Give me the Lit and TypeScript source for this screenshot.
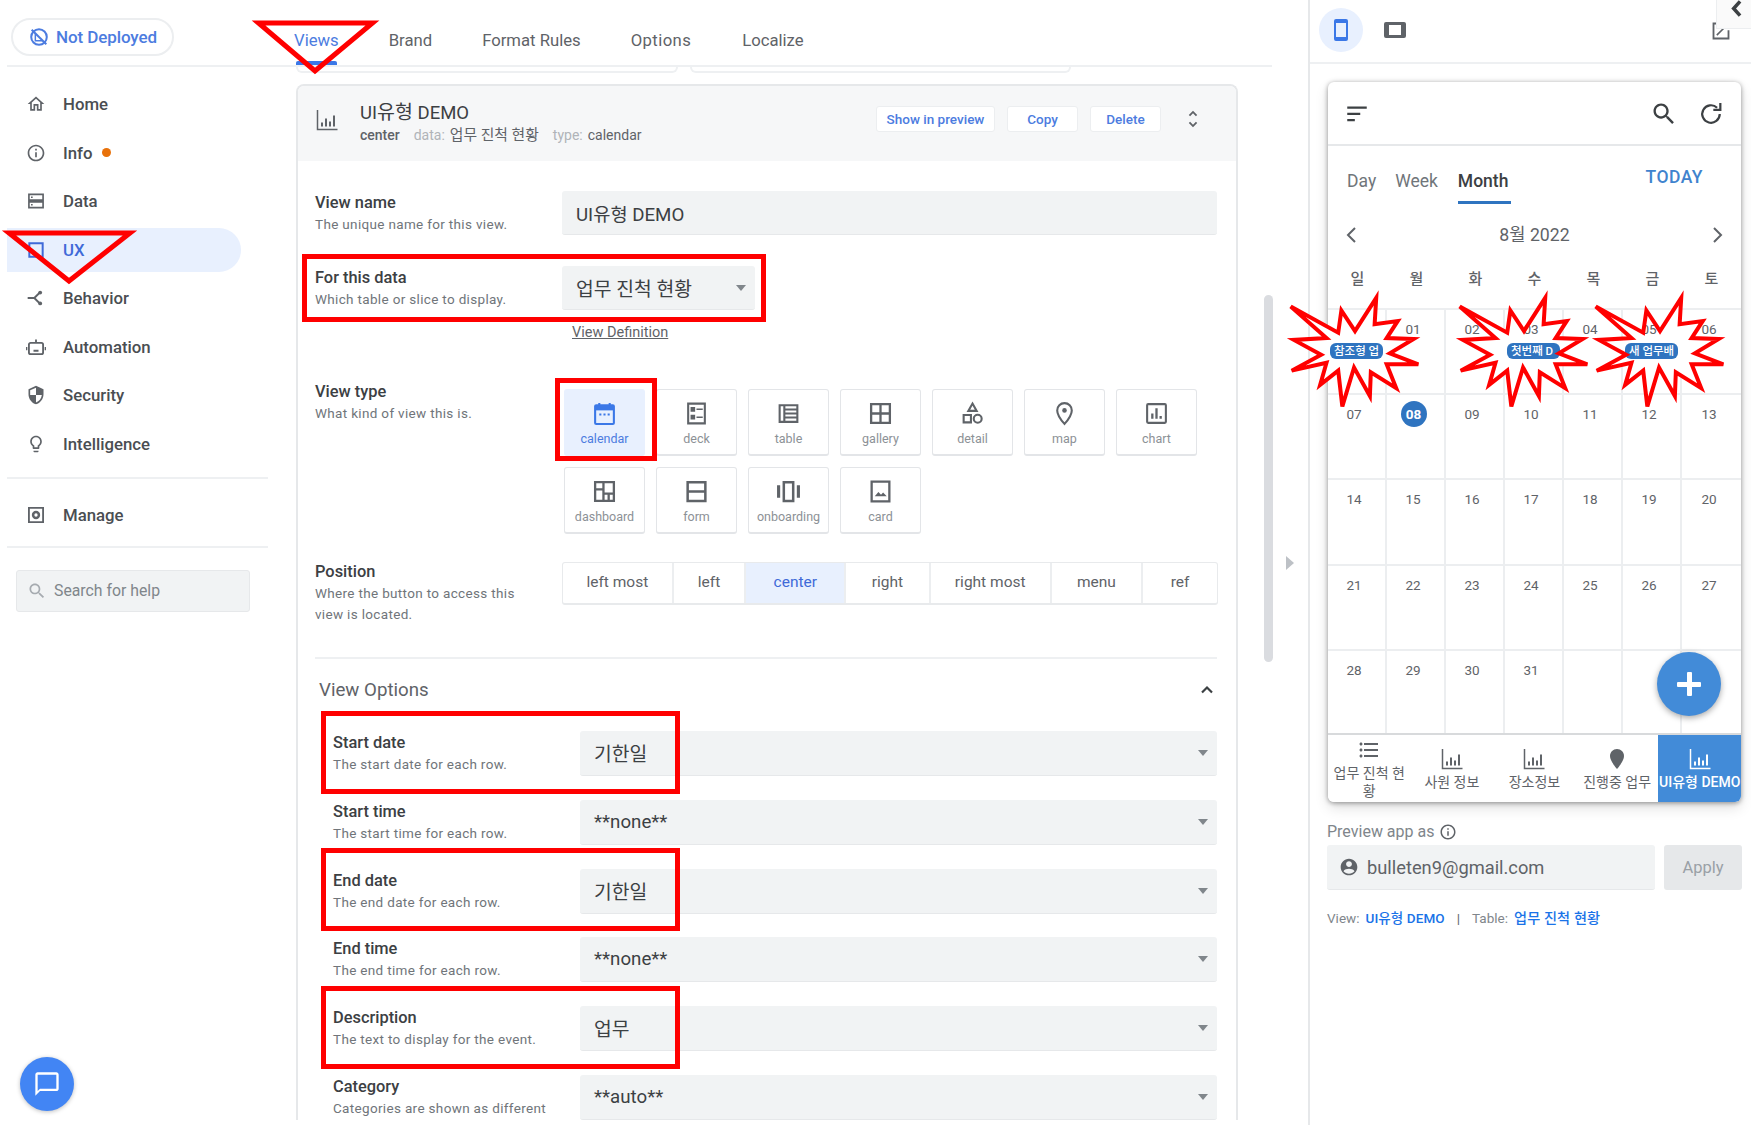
import { LitElement, html, css, svg } from "lit";
import { customElement } from "lit/decorators.js";

const P = {
  home: "M12 5.69l5 4.5V18h-2v-6H9v6H7v-7.81l5-4.5M12 3L2 12h3v8h6v-6h2v6h6v-8h3L12 3z",
  info: "M11 7h2v2h-2zm0 4h2v6h-2zm1-9C6.48 2 2 6.48 2 12s4.48 10 10 10 10-4.48 10-10S17.52 2 12 2zm0 18c-4.41 0-8-3.59-8-8s3.59-8 8-8 8 3.59 8 8-3.59 8-8 8z",
  shield: "M12 1L3 5v6c0 5.55 3.84 10.74 9 12 5.16-1.26 9-6.45 9-12V5l-9-4zm0 10.99h7c-.53 4.12-3.28 7.79-7 8.94V12H5V6.3l7-3.11v8.8z",
  bulb: "M9 21c0 .55.45 1 1 1h4c.55 0 1-.45 1-1v-1H9v1zm3-19C8.14 2 5 5.14 5 9c0 2.38 1.19 4.47 3 5.74V17c0 .55.45 1 1 1h6c.55 0 1-.45 1-1v-2.26c1.81-1.27 3-3.36 3-5.74 0-3.86-3.14-7-7-7zm2.85 11.1l-.85.6V16h-4v-2.3l-.85-.6C7.8 12.16 7 10.63 7 9c0-2.76 2.24-5 5-5s5 2.24 5 5c0 1.63-.8 3.16-2.15 4.1z",
  search: "M15.5 14h-.79l-.28-.27C15.41 12.59 16 11.11 16 9.5 16 5.91 13.09 3 9.5 3S3 5.91 3 9.5 5.91 16 9.5 16c1.61 0 3.09-.59 4.23-1.57l.27.28v.79l5 4.99L20.49 19l-4.99-5zm-6 0C7.01 14 5 11.99 5 9.5S7.01 5 9.5 5 14 7.01 14 9.5 11.99 14 9.5 14z",
  unfold: "M12 5.83L15.17 9l1.41-1.41L12 3 7.41 7.59 8.83 9 12 5.83zm0 12.34L8.83 15l-1.41 1.41L12 21l4.59-4.59L15.17 15 12 18.17z",
  chat: "M20 2H4c-1.1 0-2 .9-2 2v18l4-4h14c1.1 0 2-.9 2-2V4c0-1.1-.9-2-2-2zm0 14H6l-2 2V4h16v12z",
  account: "M12 2C6.48 2 2 6.48 2 12s4.48 10 10 10 10-4.48 10-10S17.52 2 12 2zm0 3c1.93 0 3.5 1.57 3.5 3.5S13.93 12 12 12s-3.5-1.57-3.5-3.5S10.07 5 12 5zm0 15c-2.6 0-5-1.1-6.6-3 .9-1.8 4.4-2.8 6.6-2.8s5.7 1 6.6 2.8C17 18.9 14.6 20 12 20z",
  pin: "M12 2C8.13 2 5 5.13 5 9c0 5.25 7 13 7 13s7-7.75 7-13c0-3.87-3.13-7-7-7z",
  list: "M4 10.5c-.83 0-1.5.67-1.5 1.5s.67 1.5 1.5 1.5 1.5-.67 1.5-1.5-.67-1.5-1.5-1.5zm0-6c-.83 0-1.5.67-1.5 1.5S3.17 7.5 4 7.5 5.5 6.83 5.5 6 4.83 4.5 4 4.5zm0 12c-.83 0-1.5.68-1.5 1.5s.68 1.5 1.5 1.5 1.5-.68 1.5-1.5-.67-1.5-1.5-1.5zM7 19h14v-2H7v2zm0-6h14v-2H7v2zm0-8v2h14V5H7z",
};

const fill = (d: string) => svg`<path d=${d} fill="currentColor"></path>`;
const line = (d: string, w = 2) =>
  svg`<path d=${d} fill="none" stroke="currentColor" stroke-width=${w}></path>`;

const ICONS: Record<string, unknown> = {
  home: fill(P.home),
  info: fill(P.info),
  data: line("M3.5 4h17v7h-17zM3.5 13h17v7h-17zM6 7.5h2M6 16.5h2"),
  ux: line("M4 4h16v16H4z", 2.4),
  behavior: svg`<path d="M2 12h8l6-6M10 12l6 6" fill="none" stroke="currentColor" stroke-width="2.200"></path><circle cx="17" cy="5.500" r="2.300" fill="currentColor"></circle><circle cx="17" cy="18.500" r="2.300" fill="currentColor"></circle>`,
  auto: svg`<path d="M5.500 7h13a2 2 0 0 1 2 2v9.500a2 2 0 0 1-2 2h-13a2 2 0 0 1-2-2V9a2 2 0 0 1 2-2zM12 7V3M0.500 12v4M23.500 12v4M8.500 12v.1M15.500 12v.1M9 16.500h6" fill="none" stroke="currentColor" stroke-width="2.200"></path>`,
  shield: fill(P.shield),
  bulb: fill(P.bulb),
  manage: svg`<path d="M3.500 3.500h17v17h-17z" fill="none" stroke="currentColor" stroke-width="2.200"></path><circle cx="12" cy="12" r="5" fill="currentColor"></circle><circle cx="12" cy="12" r="2" fill="#fff"></circle>`,
  search: fill(P.search),
  notdep: svg`<circle cx="12" cy="12" r="8.500" fill="none" stroke="currentColor" stroke-width="2.200"></circle><path d="M4 4l16 16" stroke="currentColor" stroke-width="2.200"></path><path d="M8 8v8h8" fill="none" stroke="currentColor" stroke-width="1.600"></path>`,
  bars: svg`<path d="M2.500 2v19.500h20" fill="none" stroke="currentColor" stroke-width="1.500"></path><path d="M7 18.500v-4M11 18.500v-8M15 18.500v-5M19 18.500v-11" fill="none" stroke="currentColor" stroke-width="2"></path>`,
  unfold: fill(P.unfold),
  chev: line("M6 15l6-6 6 6", 2.6),
  calendar: svg`<path d="M4 4h16a1 1 0 0 1 1 1v16a1 1 0 0 1-1 1H4a1 1 0 0 1-1-1V5a1 1 0 0 1 1-1zM7 2v3M17 2v3" fill="none" stroke="currentColor" stroke-width="2"></path><path d="M3 4h18v5H3z" fill="currentColor"></path><path d="M7 12h2v2H7zM11 12h2v2h-2zM15 12h2v2h-2z" fill="currentColor"></path>`,
  deck: svg`<path d="M4 2.500h16v19H4z" fill="none" stroke="currentColor" stroke-width="2"></path><path d="M7 6.500h3v3H7zM7 14h3v3H7zM12 8h6M12 15.500h6" fill="currentColor" stroke="currentColor" stroke-width="1.400"></path>`,
  table: line("M3.500 4h17v16h-17zM8 4v16M8 8.200h12.500M8 12h12.500M8 15.800h12.500"),
  gallery: line("M3 3h18v18H3zM12 3v18M3 12h18", 2.2),
  detail: svg`<path d="M12 2.500l4 7H8z" fill="none" stroke="currentColor" stroke-width="2"></path><path d="M3.500 13.500h7v7h-7z" fill="none" stroke="currentColor" stroke-width="2"></path><circle cx="17" cy="17" r="3.800" fill="none" stroke="currentColor" stroke-width="2"></circle>`,
  map: svg`<path d="M12 2C8 2 5 5 5 9c0 5 7 13 7 13s7-8 7-13c0-4-3-7-7-7z" fill="none" stroke="currentColor" stroke-width="2"></path><circle cx="12" cy="9" r="2.200" fill="currentColor"></circle>`,
  chart: svg`<path d="M4 3h16a1 1 0 0 1 1 1v16a1 1 0 0 1-1 1H4a1 1 0 0 1-1-1V4a1 1 0 0 1 1-1z" fill="none" stroke="currentColor" stroke-width="2"></path><path d="M8 17v-5M12 17V7M16 17v-2.500" fill="none" stroke="currentColor" stroke-width="2.200"></path>`,
  dashboard: line("M3 3h18v18H3zM3 10h8M11 3v18M11 14h10M16 14v7", 2.2),
  form: line("M3.500 3h17v18h-17zM3.500 12h17", 2.4),
  onboarding: svg`<path d="M7.500 3h9v18h-9z" fill="none" stroke="currentColor" stroke-width="2.400"></path><path d="M1 6h3v12H1zM20 6h3v12h-3z" fill="currentColor"></path>`,
  card: svg`<path d="M3.500 2.500h17v19h-17z" fill="none" stroke="currentColor" stroke-width="2.200"></path><path d="M6.500 16.500l3.500-4 2.500 2.500 2-2 3.500 3.500z" fill="currentColor"></path>`,
  phone: svg`<path d="M7 1h10a2 2 0 0 1 2 2v18a2 2 0 0 1-2 2H7a2 2 0 0 1-2-2V3a2 2 0 0 1 2-2zm0 4v14h10V5z" fill="currentColor"></path>`,
  tablet: svg`<path d="M3 4h18a2 2 0 0 1 2 2v12a2 2 0 0 1-2 2H3a2 2 0 0 1-2-2V6a2 2 0 0 1 2-2zm3 3v10h12V7z" fill="currentColor"></path>`,
  external: svg`<path d="M21 11v10H3V3h9" fill="none" stroke="currentColor" stroke-width="2.200"></path><path d="M7 17l8-8" fill="none" stroke="currentColor" stroke-width="2"></path>`,
  sort: svg`<path d="M3 5h18v2.200H3zM3 10.800h12v2.200H3zM3 16.600h7v2.200H3z" fill="currentColor"></path>`,
  refresh: svg`<path d="M19.500 12a7.500 7.500 0 1 1-2.300-5.400" fill="none" stroke="currentColor" stroke-width="1.900"></path><path d="M20 2.500v6h-6" fill="none" stroke="currentColor" stroke-width="1.900"></path>`,
  chat: fill(P.chat),
  account: fill(P.account),
  pin: fill(P.pin),
  list: fill(P.list),
  left: line("M15 5l-7 7 7 7", 2),
  right: line("M9 5l7 7-7 7", 2),
  back: line("M17 2l-9 10 9 10", 5),
};

const icon = (name: string, cls = "") =>
  html`<svg class="ic ${cls}" viewBox="0 0 24 24" aria-hidden="true">${ICONS[name]}</svg>`;

const NAV = [
  ["home", "Home"],
  ["info", "Info"],
  ["data", "Data"],
  ["ux", "UX"],
  ["behavior", "Behavior"],
  ["auto", "Automation"],
  ["shield", "Security"],
  ["bulb", "Intelligence"],
];
const TABS = ["Views", "Brand", "Format Rules", "Options", "Localize"];
const TYPES = ["calendar", "deck", "table", "gallery", "detail", "map", "chart", "dashboard", "form", "onboarding", "card"];
const POS = [
  ["left most", 111],
  ["left", 73],
  ["center", 100],
  ["right", 85],
  ["right most", 121],
  ["menu", 92],
  ["ref", 74],
];
const OPTS = [
  ["Start date", "The start date for each row.", "기한일", true],
  ["Start time", "The start time for each row.", "**none**", false],
  ["End date", "The end date for each row.", "기한일", true],
  ["End time", "The end time for each row.", "**none**", false],
  ["Description", "The text to display for the event.", "업무", true],
  ["Category", "Categories are shown as different", "**auto**", false],
];
const BOTTOM = [
  ["list", "업무 진척 현황"],
  ["bars", "사원 정보"],
  ["bars", "장소정보"],
  ["pin", "진행중 업무"],
  ["bars", "UI유형 DEMO"],
];
const DOW = ["일", "월", "화", "수", "목", "금", "토"];
const EVENTS: Record<number, string> = { 0: "참조형 업", 3: "첫번째 D", 5: "새 업무배" };

const STAR = [
  [82, 912], [232, 995], [242, 925], [285, 990], [352, 885], [347, 968], [420, 958], [385, 1012],
  [470, 1015], [395, 1060], [485, 1095], [385, 1095], [415, 1170], [335, 1120], [332, 1195],
  [282, 1105], [245, 1228], [232, 1115], [175, 1160], [195, 1090], [85, 1115], [178, 1065],
  [92, 1018], [195, 1012],
];
const starPts = (dx: number) =>
  STAR.map(([x, y]) => {
    const sx = 285 + (x - 285) * 0.95;
    const sy = 1055 + (y - 1055) * 0.95;
    return `${1260 + sx / 3 + dx},${sy / 3}`;
  }).join(" ");
const STAR_DX = [0, 169, 305];

@customElement("app-root")
export class AppRoot extends LitElement {
  static styles = css`
    :host {
      display: block;
      width: 1751px;
      height: 1125px;
      font-family: Roboto, "Noto Sans CJK KR", sans-serif;
      color: #3c4043;
      background: #fff;
    }
    * { box-sizing: border-box; }
    .ic { display: block; width: 20px; height: 20px; flex: none; }
    .app { position: relative; display: flex; width: 1751px; height: 1125px; overflow: hidden; }
    .editor { width: 1272px; flex: none; display: flex; flex-direction: column; padding-left: 7px; }
    .topbar { height: 67px; flex: none; display: flex; border-bottom: 2px solid #eef0f2; }
    .pillwrap { width: 287px; flex: none; padding: 18px 0 0 4px; }
    .pill {
      width: 163px; height: 38px; border: 2px solid #eceef0; border-radius: 19px;
      display: flex; align-items: center; gap: 6px; padding-left: 15px;
      color: #4c7ce0; font-size: 17px; font-weight: 500; letter-spacing: -.1px;
    }
    .pill .ic { width: 22px; height: 22px; }
    .tabs { display: flex; height: 65px; }
    .tab { position: relative; font-size: 16.700px; padding-top: 31px; color: #5f6368; line-height: 20px; margin-right: 50px; }
    .tab:nth-child(4) { letter-spacing: .4px; margin-right: 51px; }
    .tab.on { color: #4c7ce0; }
    .tab.on::after { content: ""; position: absolute; left: 2px; right: 2px; bottom: 0; height: 4px; background: #3b78e7; border-radius: 2px 2px 0 0; }
    .body { flex: 1; display: flex; min-height: 0; }
    .side { width: 289px; flex: none; padding-top: 13px; }
    .nav { height: 48.500px; display: flex; align-items: center; padding-left: 19px; gap: 17px; font-size: 16.800px; font-weight: 500; color: #4a4e52; }
    .nav .ic { width: 20px; height: 20px; color: #5f6368; }
    .nav.on { width: 234px; height: 44px; margin: 2px 0 2.500px; background: #e8f0fe; border-radius: 0 22px 22px 0; color: #3f6ad8; }
    .nav.on .ic { color: #3f6ad8; }
    .dot { width: 9px; height: 9px; border-radius: 50%; background: #e8710a; margin-left: -8px; }
    .sep { width: 261px; border-top: 2px solid #eef0f2; }
    .sep.a { margin-top: 9px; }
    .sep.b { margin-top: 6px; }
    .manage { margin-top: 12px; }
    .search { width: 234px; height: 42px; margin: 22px 0 0 9px; background: #f1f3f4; border: 1px solid #e6e8ea; border-radius: 3px; display: flex; align-items: center; gap: 7px; padding-left: 10px; color: #80868b; font-size: 15.800px; }
    .search .ic { width: 20px; height: 20px; color: #a6abb0; }
    .chatbtn { position: absolute; left: 20px; top: 1057px; width: 54px; height: 54px; border-radius: 50%; background: #4285f4; color: #fff; display: flex; align-items: center; justify-content: center; box-shadow: 0 1px 4px rgba(0,0,0,.25); }
    .chatbtn .ic { width: 28px; height: 28px; }
    .main { flex: 1; min-width: 0; overflow: hidden; }
    .stubs { display: flex; gap: 12px; height: 6px; margin-bottom: 11px; }
    .stub { height: 6px; border: 2px solid #eef0f2; border-top: 0; border-radius: 0 0 8px 8px; }
    .stub.a { width: 382px; }
    .stub.b { width: 381px; }
    .card { width: 942px; border: 2px solid #e6e8ea; border-bottom: 0; border-radius: 8px 8px 0 0; }
    .chead { height: 75px; background: #f6f7f8; display: flex; align-items: flex-start; padding: 16px 0 0 17px; border-radius: 6px 6px 0 0; }
    .chead > .ic { width: 24px; height: 24px; margin: 6px 21px 0 0; color: #5f6368; }
    .ctitle { font-size: 18.500px; line-height: 22px; color: #3c4043; }
    .ctitle .k { font-size: 19.500px; }
    .csub { display: flex; font-size: 14px; line-height: 22px; margin-top: 0; color: #9aa0a6; }
    .csub b { font-weight: 500; color: #5f6368; margin-right: 14px; }
    .csub span { color: #5f6368; margin-right: 14px; }
    .csub .k { font-size: 14.800px; }
    .csub i { font-style: normal; color: #b0b4b8; margin-right: 5px; }
    .cbtns { margin-left: auto; display: flex; gap: 12px; padding-top: 4px; }
    .btn { height: 26px; background: #fff; border: 1px solid #eceef0; border-radius: 3px; color: #4c7ce0; font-size: 13.500px; font-weight: 500; display: flex; align-items: center; justify-content: center; }
    .btn.a { width: 119px; }
    .btn.b { width: 71px; }
    .btn.c { width: 71px; }
    .cbtns .ic { width: 22px; height: 22px; margin: 2px 32px 0 9px; color: #5f6368; }
    .cbody { padding: 30px 19px 0 17px; }
    .field { display: grid; grid-template-columns: 247px 1fr; }
    .lab { font-size: 16.400px; font-weight: 500; line-height: 22px; padding-top: 1px; color: #3c4043; }
    .sub { font-size: 13.500px; line-height: 21px; color: #70757a; letter-spacing: .33px; }
    .input { height: 44px; background: #f1f3f4; border-bottom: 1px solid #e6e8ea; border-radius: 3px; display: flex; align-items: center; padding: 0 10px 0 14px; font-size: 18.700px; color: #3c4043; position: relative; }
    .input .k { font-size: 19.300px; }
    .input.sel { width: 193px; }
    .caret { margin-left: auto; width: 0; height: 0; border-left: 5.500px solid transparent; border-right: 5.500px solid transparent; border-top: 6px solid #80868b; margin-right: -1px; }
    .m31 { margin-top: 31px; }
    .vdef { margin: 13px 0 0 257px; font-size: 14.500px; line-height: 20px; color: #5f6368; text-decoration: underline; }
    .vt { margin-top: 46px; }
    .vt .labels { margin-top: -9px; }
    .types { display: grid; grid-template-columns: repeat(7, 81px); gap: 11px; margin-left: 2px; }
    .type { height: 67px; border: 1px solid #e3e5e8; border-bottom-width: 2px; border-radius: 3px; display: flex; flex-direction: column; align-items: center; padding-top: 11px; color: #5f6368; font-size: 12.500px; }
    .type .ic { width: 25px; height: 25px; margin-bottom: 5px; }
    .type span { color: #8c9196; line-height: 16px; }
    .type.on { background: #e8f0fe; border-color: #e8f0fe; color: #3b78e7; }
    .type.on span { color: #4c7ce0; }
    .pos { margin-top: 28px; }
    .pos .labels { margin-top: -2px; }
    .seg { display: flex; height: 43px; border: 1px solid #e8eaec; border-bottom-width: 2px; border-radius: 3px; width: 656px; }
    .seg div { display: flex; align-items: center; justify-content: center; border-right: 2px solid #eceef0; font-size: 15.500px; color: #5f6368; padding-bottom: 3px; }
    .seg div:last-child { border-right: 0; }
    .seg .on { background: #e8f0fe; color: #3f6ad8; }
    .rule { margin-top: 32px; border-top: 2px solid #eef0f2; }
    .vohead { display: flex; align-items: center; justify-content: space-between; height: 24px; margin: 19px 0 0 4px; font-size: 18.700px; color: #5f6368; }
    .vohead .ic { width: 20px; height: 20px; color: #3c4043; margin-right: 0; }
    .opts { padding: 29px 0 0 18px; display: grid; row-gap: 23.800px; }
    .opt { display: grid; grid-template-columns: 247px 1fr; }
    .opt .input { height: 45px; }
    .scroll { position: absolute; left: 1264px; top: 295px; width: 9px; height: 367px; border-radius: 5px; background: #dadce0; }
    .gutter { width: 36px; flex: none; display: flex; align-items: center; justify-content: center; }
    .tri { width: 0; height: 0; border-top: 7px solid transparent; border-bottom: 7px solid transparent; border-left: 8px solid #bdc1c6; margin-left: -1px; }
    .preview { flex: 1; border-left: 2px solid #e6e8ea; display: flex; flex-direction: column; position: relative; }
    .phead { height: 64px; flex: none; border-bottom: 2px solid #eef0f2; display: flex; align-items: center; padding-left: 9px; }
    .circ { width: 44px; height: 44px; border-radius: 50%; background: #e8f0fe; color: #3b78e7; display: flex; align-items: center; justify-content: center; margin-top: -3px; }
    .circ .ic { width: 24px; height: 24px; }
    .tbl { width: 24px; height: 24px; margin: -3px 0 0 20px; color: #5f6368; }
    .collapse { position: absolute; right: 0; top: 0; width: 35px; height: 29px; background: #fafafa; border-left: 1px solid #eceef0; border-bottom: 1px solid #eceef0; display: flex; align-items: flex-start; justify-content: flex-end; padding: 0 6px 0 0; color: #3c4043; z-index: 1; }
    .collapse .ic { width: 17px; height: 17px; }
    .ext { position: absolute; left: 401px; top: 21px; width: 20px; height: 20px; color: #5f6368; }
    .frame { width: 413px; height: 720px; margin: 18px 0 0 18px; border-radius: 6px; box-shadow: 0 1px 5px rgba(0,0,0,.4), 0 6px 14px rgba(0,0,0,.12); display: flex; flex-direction: column; position: relative; }
    .fhead { height: 64px; flex: none; border-bottom: 2px solid #e6e8ea; display: flex; align-items: center; padding: 2px 16px 0 16px; color: #3c4043; }
    .fhead .ic { width: 28px; height: 28px; }
    .fhead .ic:first-child { width: 26px; height: 26px; }
    .fhead .s { margin-left: auto; margin-right: 19px; }
    .ftabs { height: 58px; flex: none; display: flex; padding: 24px 38px 0 19px; font-size: 17.500px; color: #70757a; position: relative; }
    .ftabs div { margin-right: 18px; line-height: 22px; height: 34px; }
    .ftabs div:first-child { margin-right: 19px; }
    .ftabs .on { color: #3c4043; font-weight: 500; border-bottom: 3px solid #2f74c0; width: 53px; white-space: nowrap; margin-left: 2px; }
    .ftabs .today { margin: -4px 0 0 auto; color: #3f83ce; font-weight: 500; letter-spacing: .5px; }
    .mon { height: 30px; display: flex; align-items: center; justify-content: space-between; padding: 0 12px; font-size: 17.700px; color: #5f6368; margin-top: 14px; }
    .mon .ic { width: 24px; height: 24px; margin-top: 3px; }
    .dow { display: grid; grid-template-columns: repeat(7, minmax(0, 1fr)); height: 60px; padding-top: 21px; line-height: 20px; font-size: 15px; font-weight: 500; text-align: center; color: #5f6368; }
    .grid { flex: 1; min-height: 0; display: grid; grid-template-columns: repeat(7, minmax(0, 1fr)); grid-template-rows: repeat(4, 85.200px) 85px; }
    .cell { border-top: 2px solid #eceef0; border-right: 2px solid #eceef0; padding-top: 9px; font-size: 13.500px; color: #5f6368; text-align: center; line-height: 20px; min-width: 0; }
    .cell:nth-child(7n) { border-right: 0; }
    .num { position: relative; z-index: 2; display: inline-block; margin-right: 5px; }
    .num.today { width: 26px; height: 26px; border-radius: 50%; background: #2f74c0; color: #fff; font-weight: 700; line-height: 26px; margin-top: -3px; margin-right: 4px; }
    .evt { position: relative; z-index: 2; display: block; height: 16px; margin: 4px 2px 0; background: #2f74c0; color: #fff; border-radius: 6px; font-size: 11.500px; font-weight: 500; line-height: 16px; overflow: hidden; white-space: nowrap; text-align: left; padding-left: 4px; }
    .bnav { height: 69px; flex: none; display: grid; grid-template-columns: repeat(5, minmax(0, 1fr)); border-top: 2px solid #d8dadc; position: relative; z-index: 0; margin-top: -1px; border-radius: 0 0 6px 6px; overflow: hidden; background: #fff; }
    .bi { display: flex; flex-direction: column; align-items: center; justify-content: center; padding: 0 4px; text-align: center; font-size: 14px; line-height: 18px; color: #5f6368; }
    .bi .ic { width: 24px; height: 24px; margin-bottom: 2px; }
    .bi.on { background: #428bd8; color: #fff; padding: 0; white-space: nowrap; font-weight: 500; }
    .fab { position: absolute; left: 329px; top: 570px; width: 64px; height: 64px; border-radius: 50%; background: #428bd8; color: #fff; display: flex; align-items: center; justify-content: center; box-shadow: 0 2px 6px rgba(0,0,0,.35); z-index: 2; }
    .fab span { position: relative; width: 24px; height: 24px; }
    .fab span::before, .fab span::after { content: ""; position: absolute; background: #fff; border-radius: 1px; }
    .fab span::before { left: 0; right: 0; top: 9.500px; height: 5px; }
    .fab span::after { top: 0; bottom: 0; left: 9.500px; width: 5px; }
    .pa { margin: 20px 0 0 17px; display: flex; align-items: center; gap: 5px; font-size: 16px; line-height: 20px; color: #80868b; }
    .pa .ic { width: 18px; height: 18px; color: #5f6368; }
    .parow { display: flex; margin: 3px 0 0 17px; gap: 9px; height: 45px; }
    .painput { width: 328px; background: #f1f3f4; border-bottom: 1px solid #e6e8ea; border-radius: 3px; display: flex; align-items: center; gap: 8px; padding-left: 12px; font-size: 18.300px; color: #5f6368; }
    .painput .ic { width: 20px; height: 20px; }
    .apply { width: 78px; background: #e6e8ea; border-radius: 3px; display: flex; align-items: center; justify-content: center; color: #9aa0a6; font-size: 16.500px; }
    .foot { margin: 18px 0 0 17px; display: flex; align-items: center; font-size: 13.500px; line-height: 20px; color: #80868b; }
    .foot b { font-weight: 500; color: #1a73e8; margin-left: 6px; letter-spacing: .1px; }
    .foot .k { font-size: 14.200px; }
    .foot i { font-style: normal; margin: 0 12px; color: #5f6368; }
    .starfill { position: absolute; left: 0; top: 0; width: 1751px; height: 1125px; z-index: 1; pointer-events: none; }
    .annot { position: absolute; left: 0; top: 0; width: 1751px; height: 1125px; z-index: 3; pointer-events: none; }
  `;

  render() {
    const cells = Array.from({ length: 35 }, (_, i) => i);
    return html`
      <div class="app">
        <div class="editor">
          <div class="topbar">
            <div class="pillwrap"><div class="pill">${icon("notdep")}Not Deployed</div></div>
            <div class="tabs">
              ${TABS.map((t, i) => html`<div class="tab ${i === 0 ? "on" : ""}">${t}</div>`)}
            </div>
          </div>
          <div class="body">
            <div class="side">
              ${NAV.map(
                ([ic, t], i) => html`<div class="nav ${i === 3 ? "on" : ""}">
                  ${icon(ic)}<span>${t}</span>${i === 1 ? html`<span class="dot"></span>` : ""}
                </div>`
              )}
              <div class="sep a"></div>
              <div class="nav manage">${icon("manage")}<span>Manage</span></div>
              <div class="sep b"></div>
              <div class="search">${icon("search")}Search for help</div>
            </div>
            <div class="main">
              <div class="stubs"><div class="stub a"></div><div class="stub b"></div></div>
              <div class="card">
                <div class="chead">
                  ${icon("bars")}
                  <div>
                    <div class="ctitle">UI<span class="k">유형</span> DEMO</div>
                    <div class="csub"><b>center</b><i>data:</i><span class="k">업무 진척 현황</span><i>type:</i><span>calendar</span></div>
                  </div>
                  <div class="cbtns">
                    <div class="btn a">Show in preview</div>
                    <div class="btn b">Copy</div>
                    <div class="btn c">Delete</div>
                    ${icon("unfold")}
                  </div>
                </div>
                <div class="cbody">
                  <div class="field">
                    <div><div class="lab">View name</div><div class="sub">The unique name for this view.</div></div>
                    <div class="input">UI유형 DEMO</div>
                  </div>
                  <div class="field m31">
                    <div><div class="lab">For this data</div><div class="sub">Which table or slice to display.</div></div>
                    <div class="input sel"><span class="k">업무 진척 현황</span><span class="caret"></span></div>
                  </div>
                  <div class="vdef">View Definition</div>
                  <div class="field vt">
                    <div class="labels"><div class="lab">View type</div><div class="sub">What kind of view this is.</div></div>
                    <div class="types">
                      ${TYPES.map(
                        (t, i) => html`<div class="type ${i === 0 ? "on" : ""}">${icon(t)}<span>${t}</span></div>`
                      )}
                    </div>
                  </div>
                  <div class="field pos">
                    <div class="labels"><div class="lab">Position</div><div class="sub">Where the button to access this<br />view is located.</div></div>
                    <div class="seg">
                      ${POS.map(
                        ([t, w]) => html`<div class=${t === "center" ? "on" : ""} style="width:${w}px">${t}</div>`
                      )}
                    </div>
                  </div>
                  <div class="rule"></div>
                  <div class="vohead"><span>View Options</span>${icon("chev")}</div>
                  <div class="opts">
                    ${OPTS.map(
                      ([a, b, c, k]) => html`<div class="opt">
                        <div><div class="lab">${a}</div><div class="sub">${b}</div></div>
                        <div class="input"><span class=${k ? "k" : ""}>${c}</span><span class="caret"></span></div>
                      </div>`
                    )}
                  </div>
                </div>
              </div>
            </div>
          </div>
        </div>
        <div class="scroll"></div>
        <div class="chatbtn">${icon("chat")}</div>
        <div class="gutter"><span class="tri"></span></div>
        <div class="preview">
          <div class="phead">
            <div class="circ">${icon("phone")}</div>
            ${icon("tablet", "tbl")}
          </div>
          ${icon("external", "ext")}
          <div class="collapse">${icon("back")}</div>
          <div class="frame">
            <div class="fhead">
              ${icon("sort")}${icon("search", "s")}${icon("refresh")}
            </div>
            <div class="ftabs">
              <div>Day</div><div>Week</div><div class="on">Month</div><div class="today">TODAY</div>
            </div>
            <div class="mon">${icon("left")}<span>8월 2022</span>${icon("right")}</div>
            <div class="dow">${DOW.map((d) => html`<span>${d}</span>`)}</div>
            <div class="grid">
              ${cells.map((n) => {
                const label = n === 0 || n > 31 ? "" : String(n).padStart(2, "0");
                const e = EVENTS[n] || "";
                return html`<div class="cell">
                  <span class="num ${n === 8 ? "today" : ""}">${label || "\u00a0"}</span>
                  ${e ? html`<span class="evt">${e}</span>` : ""}
                </div>`;
              })}
            </div>
            <div class="fab"><span></span></div>
            <div class="bnav">
              ${BOTTOM.map(
                ([ic, t], i) => html`<div class="bi ${i === 4 ? "on" : ""}">${icon(ic)}<span>${t}</span></div>`
              )}
            </div>
          </div>
          <div class="pa">Preview app as ${icon("info")}</div>
          <div class="parow">
            <div class="painput">${icon("account")}bulleten9@gmail.com</div>
            <div class="apply">Apply</div>
          </div>
          <div class="foot">View:<b>UI유형 DEMO</b><i>|</i>Table:<b class="k">업무 진척 현황</b></div>
        </div>
        <svg class="starfill" viewBox="0 0 1751 1125">
          ${STAR_DX.map((dx) => svg`<polygon points=${starPts(dx)} fill="#fff"></polygon>`)}
        </svg>
        <svg class="annot" viewBox="0 0 1751 1125" fill="none" stroke="#f00" stroke-width="5">
          ${STAR_DX.map((dx) => svg`<polygon points=${starPts(dx)} stroke-width="4"></polygon>`)}
          <polygon points="258.500,23 372.500,23 315,71"></polygon>
          <polygon points="9,233 130,233 69,281"></polygon>
          <rect x="304.500" y="256.500" width="459" height="63"></rect>
          <rect x="557.500" y="380.500" width="97" height="78"></rect>
          <rect x="323.500" y="713.500" width="354" height="78"></rect>
          <rect x="323.500" y="850.500" width="354" height="78"></rect>
          <rect x="323.500" y="988.500" width="354" height="78"></rect>
        </svg>
      </div>
    `;
  }
}
